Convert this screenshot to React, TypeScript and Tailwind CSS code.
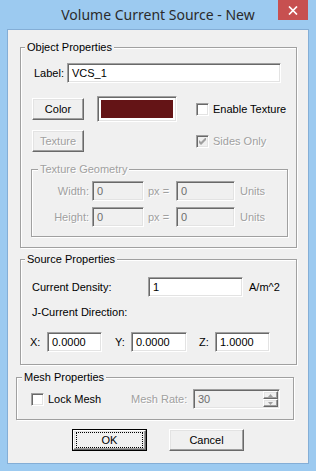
import React from "react";

const sunken =
  "border border-t-[#a0a0a0] border-l-[#a0a0a0] border-b-white border-r-white shadow-[inset_1px_1px_0_#696969,inset_-1px_-1px_0_#e3e3e3]";
const raised =
  "border border-t-white border-l-white border-b-[#696969] border-r-[#696969] shadow-[inset_-1px_-1px_0_#a0a0a0,inset_1px_1px_0_#e3e3e3] bg-[#f0f0f0]";
const etched = "border border-[#a0a0a0] shadow-[inset_1px_1px_0_#ffffff,1px_1px_0_#ffffff]";
const dim = "text-[#a0a0a0] [text-shadow:1px_1px_0_#ffffff]";

function Input({ w, value, disabled }: { w: string; value: string; disabled?: boolean }) {
  return (
    <div
      className={`${w} h-[20px] shrink-0 ${sunken} ${
        disabled ? "bg-[#f0f0f0] text-[#6d6d6d]" : "bg-white"
      } pl-[4px] flex items-center`}
    >
      {value}
    </div>
  );
}

function Check({ checked, disabled }: { checked?: boolean; disabled?: boolean }) {
  return (
    <div
      className={`w-[13px] h-[13px] shrink-0 ${sunken} ${
        disabled ? "bg-[#f0f0f0]" : "bg-white"
      } flex items-center justify-center`}
    >
      {checked && (
        <svg width="7" height="7" viewBox="0 0 7 7">
          <path
            d="M0 2 L2 4 L7 -1 L7 2 L2 7 L0 5 Z"
            fill={disabled ? "#a0a0a0" : "#000000"}
          />
        </svg>
      )}
    </div>
  );
}

function Btn({ children, disabled }: { children: React.ReactNode; disabled?: boolean }) {
  return (
    <div
      className={`w-[52px] h-[22px] shrink-0 ${raised} flex items-center justify-center ${
        disabled ? dim : ""
      }`}
    >
      {children}
    </div>
  );
}

function GeoRow({ label, mt }: { label: string; mt: string }) {
  return (
    <div className={`${mt} flex items-center h-[20px]`}>
      <span className={`w-[57px] text-right ${dim}`}>{label}</span>
      <div className="ml-[3px]">
        <Input w="w-[52px]" value="0" disabled />
      </div>
      <span className={`w-[32px] pl-[4px] ${dim}`}>px =</span>
      <Input w="w-[59px]" value="0" disabled />
      <span className={`ml-[5px] ${dim}`}>Units</span>
    </div>
  );
}

export default function App() {
  return (
    <div className="w-[316px] h-[471px] bg-[#9ccaf0] flex flex-col font-['Liberation_Sans',Arial,sans-serif] text-[11px] leading-[13px] text-black select-none">
      <div className="h-[29px] grid grid-cols-[1fr_auto_1fr] items-start">
        <div />
        <div className="h-[29px] flex items-center font-['Noto_Sans',sans-serif] text-[14px] text-[#2b2b2b] whitespace-nowrap">
          Volume Current Source - New
        </div>
        <div className="flex justify-end pr-[8px]">
          <div className="w-[30px] h-[20px] bg-[#c75050] flex items-center justify-center">
            <svg width="10" height="9" viewBox="0 0 10 9">
              <path d="M1 0.5 L9 8.5 M9 0.5 L1 8.5" stroke="#ffffff" strokeWidth="1.7" />
            </svg>
          </div>
        </div>
      </div>

      <div className="ml-[7px] w-[302px] h-[435px] border border-[#84aed6] bg-[#f0f0f0] flex flex-col">
        {/* Object Properties */}
        <fieldset className={`mt-[11px] ml-[12px] w-[277px] ${etched} pb-[10px]`}>
          <legend className="ml-[4px] px-[2px] bg-[#f0f0f0]">Object Properties</legend>
          <div className="mt-[9px] ml-[13px] flex items-center h-[20px]">
            <span className="w-[33px]">Label:</span>
            <Input w="w-[214px]" value="VCS_1" />
          </div>
          <div className="mt-[13px] ml-[11px] flex items-center h-[26px]">
            <Btn>Color</Btn>
            <div className={`ml-[13px] w-[80px] h-[26px] shrink-0 ${sunken} bg-white p-[3px]`}>
              <div className="w-full h-full bg-[#641416]" />
            </div>
            <div className="ml-[19px]">
              <Check />
            </div>
            <span className="ml-[4px]">Enable Texture</span>
          </div>
          <div className="mt-[8px] ml-[11px] flex items-center h-[22px]">
            <Btn disabled>Texture</Btn>
            <div className="ml-[112px]">
              <Check checked disabled />
            </div>
            <span className={`ml-[4px] ${dim}`}>Sides Only</span>
          </div>
          <fieldset className={`mt-[11px] ml-[10px] w-[257px] ${etched} pb-[9px]`}>
            <legend className={`ml-[6px] px-[2px] bg-[#f0f0f0] ${dim}`}>Texture Geometry</legend>
            <GeoRow label="Width:" mt="mt-[5px]" />
            <GeoRow label="Height:" mt="mt-[6px]" />
          </fieldset>
        </fieldset>

        {/* Source Properties */}
        <fieldset className={`mt-[5px] ml-[12px] w-[277px] ${etched} pb-[12px]`}>
          <legend className="ml-[4px] px-[2px] bg-[#f0f0f0]">Source Properties</legend>
          <div className="mt-[11px] ml-[11px] flex items-center h-[20px]">
            <span className="w-[116px]">Current Density:</span>
            <Input w="w-[95px]" value="1" />
            <span className="ml-[6px]">A/m^2</span>
          </div>
          <div className="mt-[9px] ml-[11px] h-[13px]">J-Current Direction:</div>
          <div className="mt-[13px] ml-[9px] flex items-center h-[20px]">
            <span className="w-[17px]">X:</span>
            <Input w="w-[55px]" value="0.0000" />
            <span className="ml-[13px] w-[16px]">Y:</span>
            <Input w="w-[56px]" value="0.0000" />
            <span className="ml-[12px] w-[16px]">Z:</span>
            <Input w="w-[55px]" value="1.0000" />
          </div>
        </fieldset>

        {/* Mesh Properties */}
        <fieldset className={`mt-[6px] ml-[8px] w-[278px] ${etched} pb-[10px]`}>
          <legend className="ml-[5px] px-[2px] bg-[#f0f0f0]">Mesh Properties</legend>
          <div className="mt-[5px] ml-[14px] flex items-center h-[20px]">
            <Check />
            <span className="ml-[4px] w-[83px]">Lock Mesh</span>
            <span className={`w-[62px] ${dim}`}>Mesh Rate:</span>
            <div className={`w-[87px] h-[20px] shrink-0 ${sunken} bg-[#f0f0f0] flex`}>
              <div className="flex-1 pl-[4px] flex items-center text-[#6d6d6d]">30</div>
              <div className="w-[16px] flex flex-col py-[1px] pr-[1px]">
                <div className={`h-[8px] ${raised} flex items-center justify-center`}>
                  <svg width="5" height="3" viewBox="0 0 5 3">
                    <path d="M2.5 0 L5 3 L0 3 Z" fill="#a0a0a0" />
                  </svg>
                </div>
                <div className={`h-[8px] ${raised} flex items-center justify-center`}>
                  <svg width="5" height="3" viewBox="0 0 5 3">
                    <path d="M0 0 L5 0 L2.5 3 Z" fill="#a0a0a0" />
                  </svg>
                </div>
              </div>
            </div>
          </div>
        </fieldset>

        {/* Buttons */}
        <div className="mt-[9px] flex justify-center gap-[22px]">
          <div className="w-[75px] h-[22px] border border-black">
            <div className={`w-full h-full ${raised} px-[2px] py-[1px]`}>
              <div className="w-full h-full border border-dotted border-black flex items-center justify-center">
                OK
              </div>
            </div>
          </div>
          <div className={`w-[75px] h-[22px] ${raised} flex items-center justify-center`}>Cancel</div>
        </div>
      </div>
    </div>
  );
}
